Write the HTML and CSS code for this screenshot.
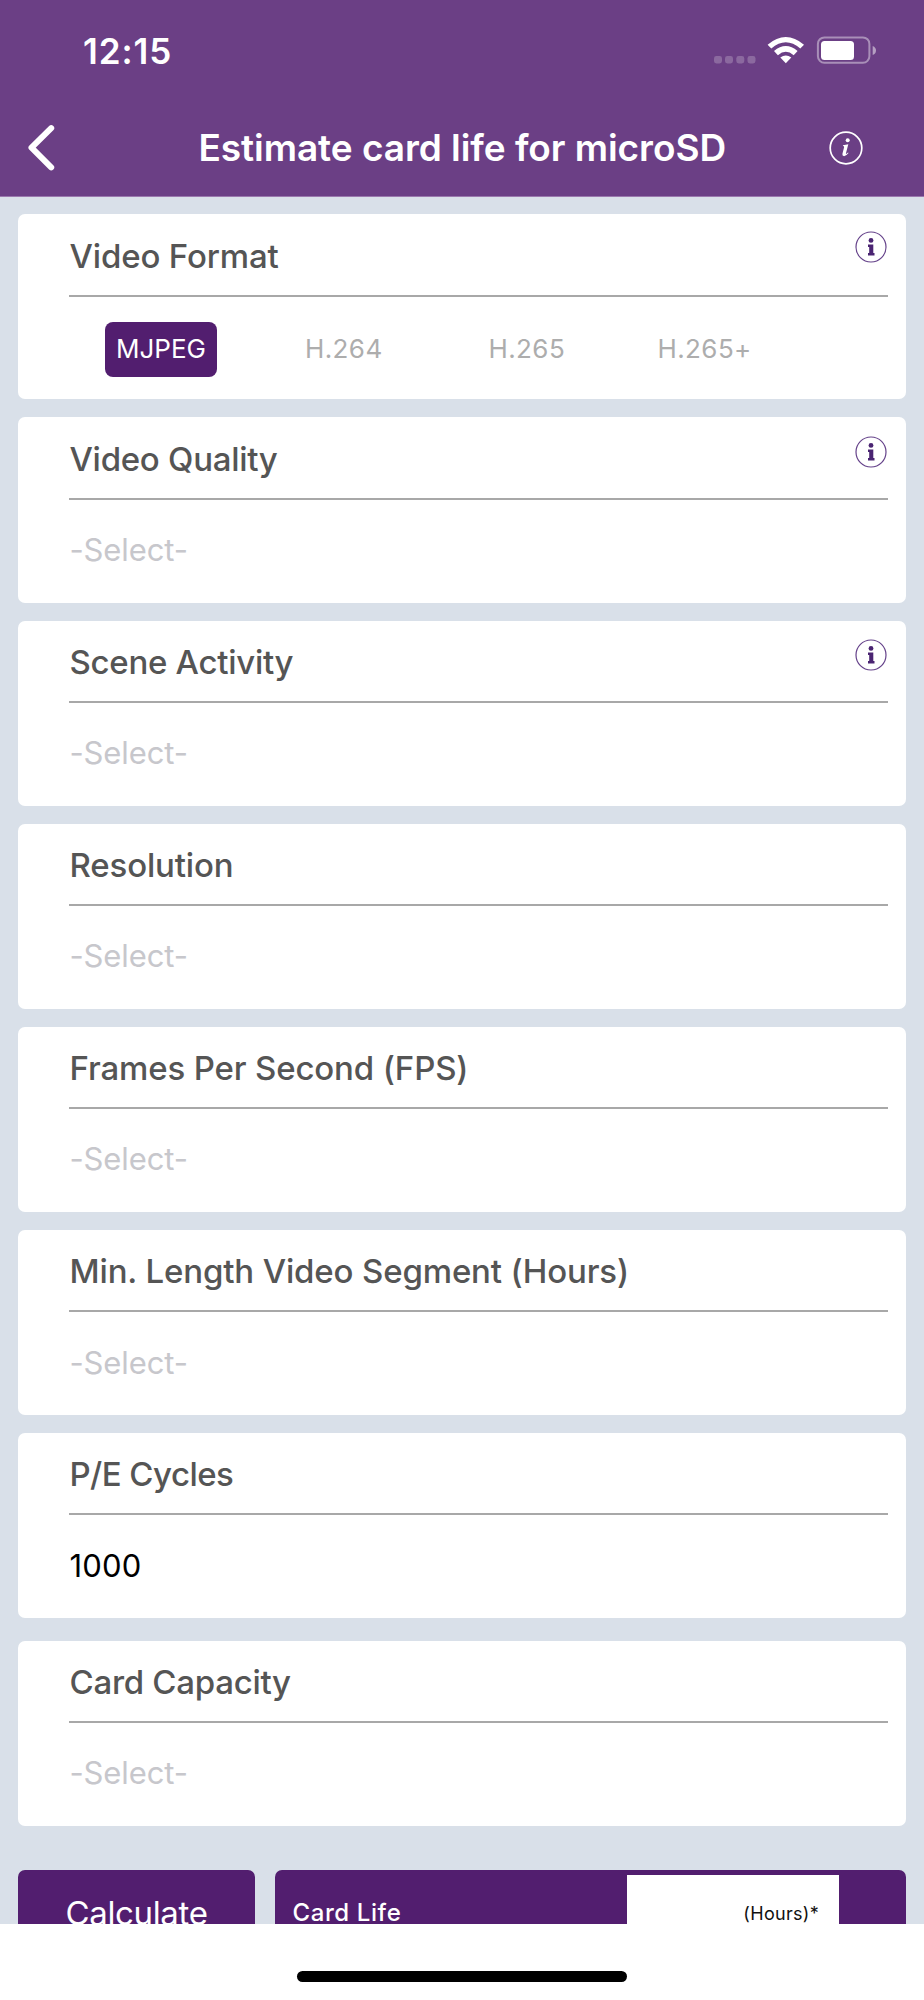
FILE: index.html
```html
<!DOCTYPE html>
<html lang="en">
<head>
<meta charset="utf-8">
<title>Estimate card life for microSD</title>
<link rel="stylesheet" href="styles.css">
</head>
<body>
<div class="screen">
  <header class="header">
    <div class="status">
      <span class="time">12:15</span>
      <svg class="status-icons" width="170" height="30" viewBox="712 35 170 30">
        <g fill="#fff" fill-opacity=".22">
          <rect x="714" y="56" width="8" height="7.5" rx="2.4"/><rect x="725" y="56" width="8" height="7.5" rx="2.4"/><rect x="736.3" y="56" width="8" height="7.5" rx="2.4"/><rect x="747.5" y="56" width="8" height="7.5" rx="2.4"/>
        </g>
        <g fill="#fff">
          <path d="M767.6 44.7Q785.8 29.3 804 44.7L800.3 48.5Q785.8 36.2 771.3 48.5Z"/>
          <path d="M774 51Q785.8 41 797.6 51L793.7 55.2Q785.8 48.5 777.9 55.2Z"/>
          <path d="M780.3 57.6Q785.8 53.6 791.3 57.6L785.8 63.2Z"/>
          <rect x="821" y="41" width="33" height="19" rx="3.5"/>
        </g>
        <rect x="817.9" y="37.4" width="51.5" height="25.4" rx="6.5" fill="none" stroke="#fff" stroke-opacity=".42" stroke-width="2"/>
        <path d="M872.7 46Q876 47.5 876 50.5Q876 53.5 872.7 55Z" fill="#fff" fill-opacity=".5"/>
      </svg>
    </div>
    <div class="navbar">
      <svg class="back" width="32" height="52" viewBox="0 0 32 52"><path d="M25.2 6.2L5.5 25.7L25.2 45.3" fill="none" stroke="#fff" stroke-width="6" stroke-linecap="round" stroke-linejoin="round"/></svg>
      <h1 class="title">Estimate card life for microSD</h1>
      <svg class="about" width="36" height="36" viewBox="0 0 36 36">
        <circle cx="18" cy="18" r="15.8" fill="none" stroke="#fff" stroke-width="1.7"/>
        <circle cx="19.7" cy="10.3" r="2" fill="#fff"/>
        <path d="M15 15.2L20.3 14.2L17.9 23.5Q17.8 24.7 20 22.6L20.5 23Q17.8 26.5 15.6 26.1Q13.9 25.7 14.5 23.6L16.1 17.2Q16.4 16 14.9 16Z" fill="#fff"/>
      </svg>
    </div>
  </header>

  <main class="form">
    <section class="card">
      <div class="card-head"><h2 class="label">Video Format</h2>
        <svg class="info info-top" viewBox="0 0 32 32"><use href="#i-info"/></svg></div>
      <div class="options">
        <span class="option selected">MJPEG</span><span class="option o2">H.264</span><span class="option o3">H.265</span><span class="option">H.265+</span>
      </div>
    </section>
    <section class="card">
      <div class="card-head"><h2 class="label snug">Video Quality</h2>
        <svg class="info" viewBox="0 0 32 32"><use href="#i-info"/></svg></div>
      <div class="value">-Select-</div>
    </section>
    <section class="card">
      <div class="card-head"><h2 class="label snug">Scene Activity</h2>
        <svg class="info" viewBox="0 0 32 32"><use href="#i-info"/></svg></div>
      <div class="value">-Select-</div>
    </section>
    <section class="card">
      <div class="card-head"><h2 class="label">Resolution</h2></div>
      <div class="value">-Select-</div>
    </section>
    <section class="card">
      <div class="card-head"><h2 class="label">Frames Per Second (FPS)</h2></div>
      <div class="value">-Select-</div>
    </section>
    <section class="card">
      <div class="card-head"><h2 class="label">Min. Length Video Segment (Hours)</h2></div>
      <div class="value">-Select-</div>
    </section>
    <section class="card">
      <div class="card-head"><h2 class="label tight">P/E Cycles</h2></div>
      <div class="value filled">1000</div>
    </section>
    <section class="card capacity">
      <div class="card-head"><h2 class="label snug">Card Capacity</h2></div>
      <div class="value">-Select-</div>
    </section>
    <div class="actions">
      <div class="calculate">Calculate</div>
      <div class="result"><span class="result-label">Card Life</span><span class="result-value">(Hours)*</span></div>
    </div>
  </main>
  <footer class="footer"><div class="home-bar"></div></footer>
</div>
<svg class="defs" width="0" height="0">
  <symbol id="i-info" viewBox="0 0 32 32">
    <circle cx="16" cy="16" r="15" fill="none" stroke="#65428a" stroke-width="1.2"/>
    <circle cx="16" cy="9.4" r="2.4" fill="#4a2472"/>
    <path d="M13 13.5H18.3V22H19.5V24.5H13V22H14.2V16H13Z" fill="#4a2472"/>
  </symbol>
</svg>
</body>
</html>
```
FILE: styles.css
```css
* { box-sizing: border-box; }
body { margin: 0; font-family: Inter, "Liberation Sans", sans-serif; }
h1, h2 { margin: 0; }
.screen { width: 924px; height: 2000px; display: flex; flex-direction: column; overflow: hidden; background: #fff; }
.defs { display: block; }

.header { flex: none; height: 197px; background: #6b3f85; border-bottom: 1px solid #9a78ae; color: #fff; }
.status { height: 98px; padding: 28px 42px 0 83px; display: flex; justify-content: space-between; align-items: flex-start; }
.time { font-size: 35px; line-height: 46px; font-weight: 600; letter-spacing: 0.9px; }
.status-icons { margin-top: 7px; }
.navbar { height: 98px; display: flex; align-items: center; padding: 0 60px 0 26px; }
.back { flex: none; margin-top: 1px; }
.title { flex: 1; margin-top: 1px; font-size: 37px; line-height: 48px; font-weight: 600; letter-spacing: -0.05px; white-space: nowrap; padding-left: 140.4px; }
.about { flex: none; margin-top: 1px; }

.form { flex: none; height: 1727px; padding: 17.4px 18px 0; background: #d9e0e9; display: flex; flex-direction: column; gap: 18px; overflow: hidden; }
.card { flex: none; height: 185.1px; background: #fff; border-radius: 7px; padding: 0 18px 0 51px; }
.card-head { height: 82.5px; border-bottom: 2px solid #a8a8a8; display: flex; justify-content: space-between; align-items: flex-start; }
.label { padding: 19.5px 0 0 0.5px; font-size: 33px; line-height: 44px; font-weight: 500; color: #555; letter-spacing: -0.15px; white-space: nowrap; }
.snug { letter-spacing: -0.28px; }
.tight { letter-spacing: -0.55px; }
.info { flex: none; width: 32px; height: 32px; margin: 18.5px 0.9px 0 0; }
.info-top { margin-top: 16.5px; }
.value { padding: 30.2px 0 0 0.4px; font-size: 31px; line-height: 40px; color: #c7c7cc; letter-spacing: -0.1px; white-space: nowrap; }
.filled { color: #000; letter-spacing: 0.2px; }
.options { display: flex; padding: 25.2px 0 0 36px; font-size: 26px; line-height: 54px; color: #adadad; letter-spacing: 0.4px; }
.option { flex: none; height: 55px; white-space: nowrap; }
.selected { width: 112px; text-align: center; border-radius: 8px; background: #521e6f; color: #fff; letter-spacing: 0; }
.o2 { margin-left: 88px; width: 183.5px; }
.o3 { width: 169px; }
.capacity { margin-top: 4.5px; }
.actions { flex: none; height: 80px; margin-top: 26.3px; display: flex; gap: 19.5px; color: #fff; }
.calculate { width: 237px; border-radius: 7px; background: #521e6f; text-align: center; font-size: 33px; line-height: 86px; letter-spacing: -0.35px; }
.result { flex: 1; display: flex; justify-content: space-between; border-radius: 7px; background: #521e6f; padding: 4.7px 67px 0 18px; }
.result-label { font-size: 24px; line-height: 76px; font-weight: 500; letter-spacing: .6px; }
.result-value { width: 212px; background: #fff; color: #111; text-align: right; padding-right: 20px; font-size: 18px; line-height: 78px; letter-spacing: .3px; }

.footer { flex: 1; display: flex; justify-content: center; padding-top: 46.5px; }
.home-bar { width: 330px; height: 11.5px; border-radius: 6px; background: #000; }
```
